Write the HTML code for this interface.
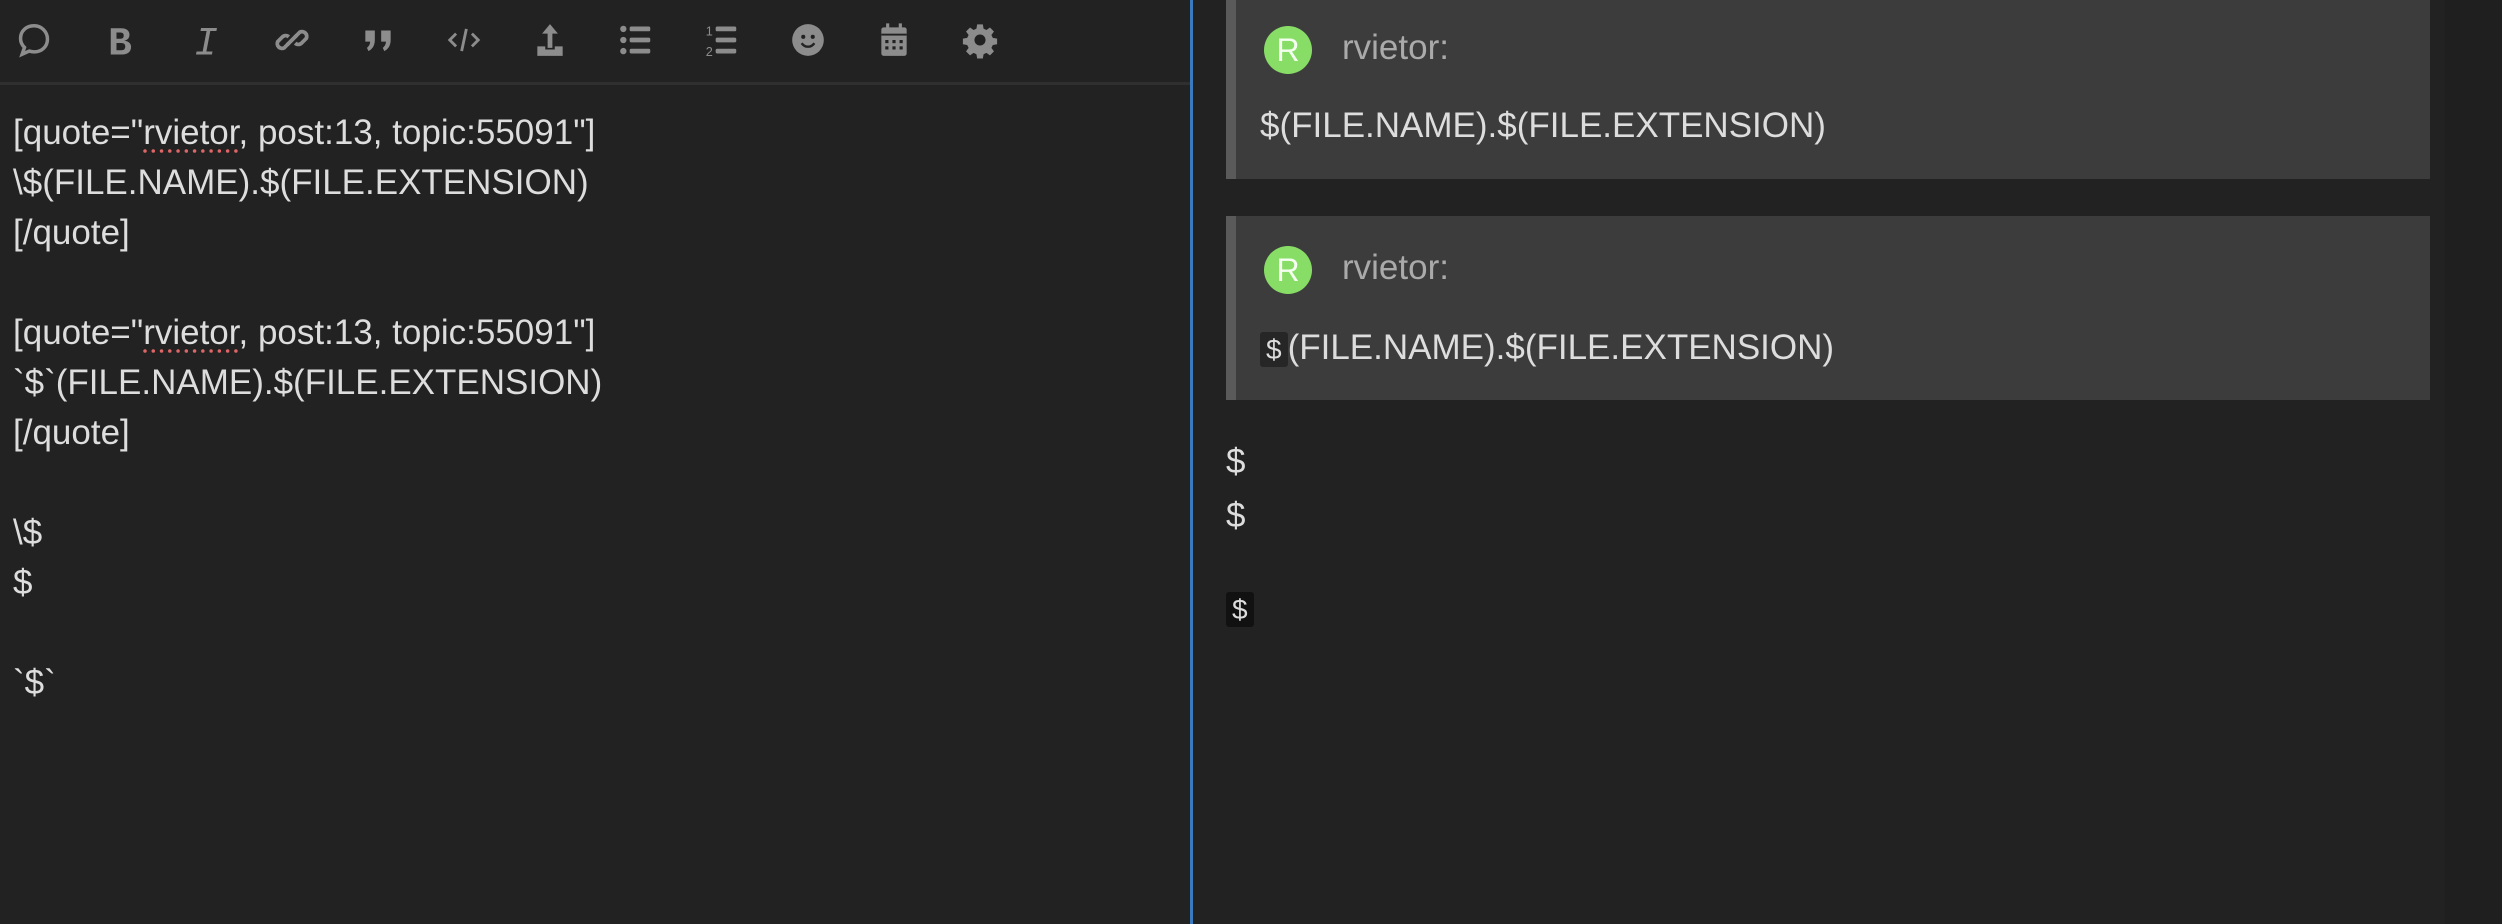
<!DOCTYPE html>
<html><head><meta charset="utf-8"><style>
*{margin:0;padding:0;box-sizing:border-box}
body{width:2502px;height:924px;background:#222;overflow:hidden;font-family:"Liberation Sans",sans-serif;color:#ddd;position:relative}
.tb{position:absolute;left:0;top:0;width:1190px;height:85px;border-bottom:3px solid #2f2f2f}
.ic{position:absolute;top:21px;width:38px;height:38px}
.ed{position:absolute;left:13px;top:108px;font-size:35px;line-height:50px;color:#ddd;white-space:pre}
.sq{text-decoration:underline dotted #d66;text-underline-offset:6px}
.vl{position:absolute;left:1190px;top:0;width:3px;height:924px;background:#3a7bc0}
.sb{position:absolute;left:2445px;top:0;width:57px;height:924px;background:#1f1f1f}
.q{position:absolute;left:1226px;width:1204px;background:#3c3c3c;border-left:10px solid #5a5a5a}
.av{position:absolute;left:28px;width:48px;height:48px;border-radius:50%;background:#88dd66;color:#f4fff0;font-size:32px;text-align:center;line-height:48px}
.nm{position:absolute;left:106px;font-size:35px;color:#aaa}
.ct{position:absolute;left:24px;font-size:35px;color:#ddd;white-space:pre}
.cd{background:#262626;border-radius:3px;padding:2px 6px;font-size:28px}
.r{position:absolute;left:1226px;font-size:35px;color:#ddd}
</style></head><body>
<div class="tb">
<svg class="ic" style="left:15px" viewBox="0 0 24 24"><path d="M12 3C7 3 3.5 6.5 3.5 11c0 2.3 1 4.3 2.5 5.7L4.5 21l4.5-2c1 .3 2 .5 3 .5 5 0 8.5-3.5 8.5-8S17 3 12 3z" fill="none" stroke="#8c8c8c" stroke-width="2.2"/></svg>
<svg class="ic" style="left:101px" viewBox="0 0 24 24"><text x="12" y="21" text-anchor="middle" font-family="Liberation Mono" font-weight="bold" font-size="25" fill="#8c8c8c">B</text></svg>
<svg class="ic" style="left:187px" viewBox="0 0 24 24"><text x="12" y="21" text-anchor="middle" font-family="Liberation Mono" font-style="italic" font-size="25" fill="#8c8c8c">I</text></svg>
<svg class="ic" style="left:273px" viewBox="0 0 24 24"><g fill="none" stroke="#8c8c8c" stroke-width="2.4"><path d="M10 14l-3 3a3 3 0 0 1-4-4l3-3a3 3 0 0 1 4 0"/><path d="M14 10l3-3a3 3 0 0 1 4 4l-3 3a3 3 0 0 1-4 0"/><path d="M9 15l6-6"/></g></svg>
<svg class="ic" style="left:359px" viewBox="0 0 24 24"><path d="M4 6h6v6c0 4-2 6-4 7l-1-2c1-1 2-2 2-4H4zM14 6h6v6c0 4-2 6-4 7l-1-2c1-1 2-2 2-4h-3z" fill="#8c8c8c"/></svg>
<svg class="ic" style="left:445px" viewBox="0 0 24 24"><g fill="none" stroke="#8c8c8c" stroke-width="1.8"><path d="M7 8l-4 4 4 4M17 8l4 4-4 4M13.5 5l-3 14"/></g></svg>
<svg class="ic" style="left:531px" viewBox="0 0 24 24"><path d="M12 2l-5 6h3.5v9h3V8H17z M4 16h5v2h6v-2h5v6H4z" fill="#8c8c8c"/></svg>
<svg class="ic" style="left:617px" viewBox="0 0 24 24"><g fill="#8c8c8c"><circle cx="4" cy="5" r="2"/><circle cx="4" cy="12" r="2"/><circle cx="4" cy="19" r="2"/><rect x="8" y="3.5" width="13" height="3" rx="1"/><rect x="8" y="10.5" width="13" height="3" rx="1"/><rect x="8" y="17.5" width="13" height="3" rx="1"/></g></svg>
<svg class="ic" style="left:703px" viewBox="0 0 24 24"><g fill="#8c8c8c"><text x="4" y="9" text-anchor="middle" font-size="8" font-family="Liberation Sans">1</text><text x="4" y="22" text-anchor="middle" font-size="8" font-family="Liberation Sans">2</text><rect x="8" y="3.5" width="13" height="3" rx="1"/><rect x="8" y="10.5" width="13" height="3" rx="1"/><rect x="8" y="17.5" width="13" height="3" rx="1"/></g></svg>
<svg class="ic" style="left:789px" viewBox="0 0 24 24"><circle cx="12" cy="12" r="10" fill="#8c8c8c"/><circle cx="9" cy="10" r="1.3" fill="#222"/><circle cx="15" cy="10" r="1.3" fill="#222"/><path d="M8 14c2 3 6 3 8 0" fill="none" stroke="#222" stroke-width="1.5"/></svg>
<svg class="ic" style="left:875px" viewBox="0 0 24 24"><g fill="#8c8c8c"><rect x="4" y="4" width="16" height="18" rx="1.5"/><rect x="7" y="1.5" width="2" height="4"/><rect x="15" y="1.5" width="2" height="4"/></g><g fill="#222"><rect x="4" y="8" width="16" height="1.2"/><rect x="6.5" y="12" width="2" height="2"/><rect x="11" y="12" width="2" height="2"/><rect x="15.5" y="12" width="2" height="2"/><rect x="6.5" y="16" width="2" height="2"/><rect x="11" y="16" width="2" height="2"/><rect x="15.5" y="16" width="2" height="2"/></g></svg>
<svg class="ic" style="left:961px" viewBox="0 0 24 24"><path d="M10 2h4l.5 3 2 1 2.5-1.8 2.8 2.8L20 9.5l1 2 3 .5v0 4l-3 .5-1 2 1.8 2.5-2.8 2.8-2.5-1.8-2 1-.5 3h-4l-.5-3-2-1L5 23.8 2.2 21 4 18.5l-1-2L0 16v-4l3-.5 1-2L2.2 7 5 4.2 7.5 6l2-1z" transform="translate(12 12) scale(.9) translate(-12 -13)" fill="#8c8c8c"/><circle cx="12" cy="12" r="3.5" fill="#222"/></svg>
</div>
<div class="ed">[quote="<span class="sq">rvietor</span>, post:13, topic:55091"]
\$(FILE.NAME).$(FILE.EXTENSION)
[/quote]

[quote="<span class="sq">rvietor</span>, post:13, topic:55091"]
`$`(FILE.NAME).$(FILE.EXTENSION)
[/quote]

\$
$

`$`</div>
<div class="vl"></div>
<div class="q" style="top:0;height:179px">
<div class="av" style="top:26px">R</div><div class="nm" style="top:28px">rvietor:</div>
<div class="ct" style="top:106px">$(FILE.NAME).$(FILE.EXTENSION)</div>
</div>
<div class="q" style="top:216px;height:184px">
<div class="av" style="top:30px">R</div><div class="nm" style="top:32px">rvietor:</div>
<div class="ct" style="top:112px"><span class="cd">$</span>(FILE.NAME).$(FILE.EXTENSION)</div>
</div>
<div class="r" style="top:442px">$</div>
<div class="r" style="top:496px">$</div>
<div class="r" style="top:588px"><span class="cd" style="background:#111">$</span></div>
<div class="sb"></div>
</body></html>
